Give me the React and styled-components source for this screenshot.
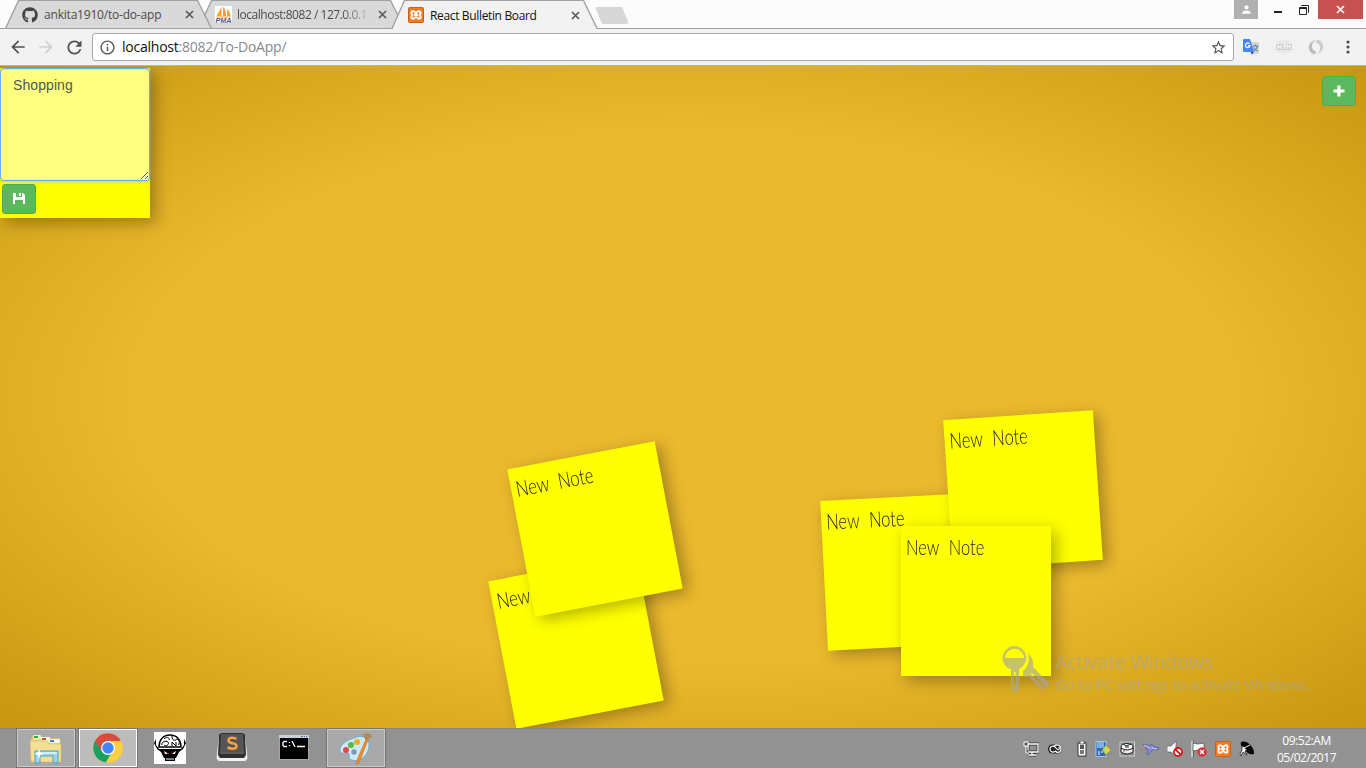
import React from "react";
import styled, { createGlobalStyle, css } from "styled-components";
import { MdArrowBack, MdArrowForward, MdRefresh, MdInfoOutline, MdStarBorder, MdPerson } from "react-icons/md";
import { FaGithub } from "react-icons/fa";

const Global = createGlobalStyle`
  * { box-sizing: border-box; }
  body { margin: 0; overflow: hidden; font-family: "Open Sans", "Noto Sans", sans-serif; }
  svg { display: block; flex: none; }
`;

const Screen = styled.div`
  display: flex;
  flex-direction: column;
  width: 1366px;
  height: 768px;
  overflow: hidden;
`;

/* Browser window */
const TitleBar = styled.header`
  display: flex;
  height: 28px;
  padding-left: 5px;
  background: #fcfcfc;
`;

const Tab = styled.div`
  position: relative;
  z-index: ${(p) => p.$z};
  display: flex;
  align-items: center;
  width: 207px;
  height: ${(p) => (p.$active ? 29 : 28)}px;
  margin-right: -14px;
  padding: 1px 16px 0 17px;
  flex: none;
  &::before, &::after {
    content: "";
    position: absolute;
    z-index: -1;
    inset: 0;
    background: #a0a0a0;
    clip-path: polygon(0 100%, 13px 0, 193px 0, 100% 100%);
  }
  &::after {
    background: ${(p) => (p.$active ? "#f2f2f2" : "#d9d9d9")};
    clip-path: polygon(1.5px 100%, 14px 1px, 192px 1px, calc(100% - 1.5px) 100%);
  }
`;

const TabTitle = styled.span`
  width: 134px;
  flex: none;
  margin-left: 6px;
  white-space: nowrap;
  font-size: 12px;
  letter-spacing: ${(p) => p.$spacing || 0}px;
  color: ${(p) => (p.$active ? "#111" : "#4c4c4c")};
  ${(p) => p.$fade && css`
    margin-left: 5px;
    mask-image: linear-gradient(90deg, #000 105px, transparent 136px);
  `}
`;

const TabClose = styled.div`
  margin-left: 7px;
`;

const NewTab = styled.div`
  width: 34px;
  height: 17px;
  margin: 7px 0 0 11px;
  background: #d7d7d7;
  border-radius: 3px;
  clip-path: polygon(0 0, 27px 0, 100% 100%, 7px 100%);
`;

const WindowControls = styled.div`
  display: flex;
  height: 19px;
  margin: 0 3px 0 auto;
`;

const Control = styled.div`
  display: flex;
  align-items: center;
  justify-content: center;
  width: ${(p) => p.$w}px;
  padding-right: ${(p) => p.$pad || 0}px;
  background: ${(p) => p.$bg || "transparent"};
  color: #fff;
`;

const Toolbar = styled.nav`
  display: flex;
  align-items: center;
  height: 38px;
  padding: 0 0 0 8px;
  background: #f2f2f2;
  border-top: 1px solid #a0a0a0;
  border-bottom: 1px solid #b5b5b5;
`;

const ToolButton = styled.div`
  display: flex;
  justify-content: center;
  width: ${(p) => p.$w || 28}px;
  padding-right: ${(p) => p.$pad ?? 8}px;
  flex: none;
  color: ${(p) => (p.$disabled ? "#d0d0d0" : "#505050")};
`;

const AddressBar = styled.div`
  display: flex;
  align-items: center;
  width: 1142px;
  height: 28px;
  padding: 0 6px;
  flex: none;
  background: #fff;
  border: 1px solid #a8a8a8;
  border-radius: 3px;
  color: #555;
`;

const Url = styled.span`
  flex: 1;
  margin: -1px 0 0 6px;
  font-size: 14px;
  letter-spacing: -0.23px;
  color: #888;
  b { font-weight: 400; color: #111; }
`;

/* Bulletin board */
const Board = styled.main`
  position: relative;
  height: 662px;
  overflow: hidden;
  background: radial-gradient(ellipse at center, #eab92d 57%, #c79810 99%);
`;

const Note = styled.article`
  position: absolute;
  left: ${(p) => p.$x}px;
  top: ${(p) => p.$y}px;
  width: 150px;
  height: 150px;
  background: #ff0;
  box-shadow: 5px 5px 15px 0 rgba(0, 0, 0, 0.3);
  transform: rotate(${(p) => p.$angle || 0}deg);
`;

const NoteText = styled.p`
  margin: 7px 0 0 5px;
  font: 300 22px/28px Lato, sans-serif;
  word-spacing: 7px;
  white-space: nowrap;
  color: #222;
  transform: scaleX(0.75);
  transform-origin: 0 0;
`;

const NoteEditor = styled.textarea`
  display: block;
  width: 150px;
  height: 113px;
  padding: 6px 12px;
  background: #ffff80;
  border: 1px solid #66afe9;
  border-radius: 4px;
  outline: none;
  box-shadow: inset 0 1px 1px rgba(0, 0, 0, 0.075), 0 0 4px rgba(102, 175, 233, 0.6);
  font: 14px/20px "Liberation Sans", Arial, sans-serif;
  letter-spacing: 0.08px;
  color: #555;
`;

const GreenButton = styled.button`
  display: flex;
  align-items: center;
  justify-content: center;
  width: 34px;
  height: 30px;
  padding: 0 1px 1px 0;
  background: #5cb85c;
  border: 1px solid #4cae4c;
  border-radius: 3px;
  color: #fff;
  ${(p) => p.$save && css`margin: 3px 0 0 2px;`}
  ${(p) => p.$floating && css`position: absolute; top: 10px; right: 10px;`}
`;

const Watermark = styled.aside`
  position: absolute;
  left: 1001px;
  top: 579px;
  display: flex;
  opacity: 0.68;
  color: #aaa69b;
`;

const WatermarkCopy = styled.div`
  margin: 3px 0 0 6px;
  white-space: nowrap;
`;

const WatermarkTitle = styled.div`
  font-size: 20px;
  line-height: 28px;
  letter-spacing: -0.4px;
`;

const WatermarkHint = styled.div`
  font-size: 15px;
  line-height: 16px;
  letter-spacing: -0.33px;
`;

/* Desktop taskbar */
const Taskbar = styled.footer`
  display: flex;
  height: 40px;
  padding-left: 17px;
  border-top: 1px solid #868686;
  background: #929292;
`;

const Apps = styled.div`
  display: flex;
  gap: 4px;
`;

const AppButton = styled.div`
  display: flex;
  align-items: center;
  justify-content: center;
  width: 58px;
  height: 38px;
  padding-bottom: ${(p) => p.$lift || 0}px;
  ${(p) => p.$open && css`
    background: #a9a9a9;
    border: 1px solid #c8c8c8;
    box-shadow: 0 0 0 1px #777;
  `}
  ${(p) => p.$focused && css`
    background: #bcbcbc;
    border-color: #fff;
  `}
`;

const Tray = styled.div`
  display: flex;
  align-items: center;
  margin-left: auto;
`;

const TrayItem = styled.div`
  display: flex;
  justify-content: center;
  width: 24px;
  padding: 0 ${(p) => (p.$shift ? 0 : 1)}px 0 ${(p) => p.$shift || 0}px;
`;

const Clock = styled.time`
  display: block;
  width: 95px;
  padding-top: 3px;
  margin-right: 12px;
  text-align: center;
  font-size: 12px;
  line-height: 17px;
  letter-spacing: -0.45px;
  color: #fff;
`;

const Cross = ({ size = 9, color = "#5a5a5a" }) => (
  <svg width={size} height={size} viewBox="0 0 9 9">
    <path d="M1 1l7 7M8 1l-7 7" stroke={color} strokeWidth="1.7" />
  </svg>
);

const XamppIcon = () => (
  <svg width="16" height="16" viewBox="0 0 16 16">
    <rect x=".5" y=".5" width="15" height="15" rx="1" fill="#f47b22" stroke="#c95e16" />
    <path d="M5 4.2c-2 0-2 2.6-.7 3.8-1.3 1.200-1.300 3.800.7 3.800S7 10 8 10s1 1.800 3 1.800 2-2.600.7-3.800C13 6.800 13 4.200 11 4.200S9 6 8 6 7 4.200 5 4.200zM6 8h4" fill="none" stroke="#fff" strokeWidth="1.900" />
  </svg>
);

const PmaIcon = () => (
  <svg width="17" height="17" viewBox="0 0 17 17">
    <rect width="17" height="17" fill="#fff" />
    <path d="M6.500 1v9H1.500zM8 .5c2.500 3 3.500 6 3 9.500H8zM12 3c2 2 3.500 4 3.500 7H12zM1 10.500h15l-1 1H2z" fill="#f7a12b" />
    <text x="0.500" y="16.500" fontFamily="Liberation Sans" fontSize="6.500" fontWeight="700" fontStyle="italic" textLength="16" lengthAdjust="spacingAndGlyphs" fill="#55558a">PMA</text>
  </svg>
);

const TranslateIcon = () => (
  <svg width="16" height="16" viewBox="0 0 16 16">
    <path d="M6 3h9a1 1 0 011 1v10a1 1 0 01-1 1H9z" fill="#d5d5d5" />
    <path d="M9.500 7h6M12.500 5.500V7M14.500 7c-.5 2.500-2 4-4 5M10.500 8.500c1 2 2.500 3 4.500 3.500" fill="none" stroke="#65859b" strokeWidth="1.200" />
    <path d="M1 0h6l4 13H1a1 1 0 01-1-1V1a1 1 0 011-1z" fill="#4285f4" />
    <path d="M7.500 13H11l-2 2.700z" fill="#3156b5" />
    <path d="M6.400 4.700A2.300 2.300 0 107 6.600H4.800" fill="none" stroke="#fff" strokeWidth="1.300" />
  </svg>
);

const HtmlBadge = () => (
  <svg width="16" height="16" viewBox="0 0 16 16">
    <path d="M2 2l9-1 3 1v11l-7 2-5-2z" fill="#e8e8e8" />
    <rect y="5" width="16" height="6" fill="#cfcfcf" />
    <path d="M2 6v4M5 6v4M2 8h3M7 6h3M8.500 6v4M11 10V6l1.500 2L14 6v4" fill="none" stroke="#fff" />
  </svg>
);

const SwirlIcon = () => (
  <svg width="16" height="16" viewBox="0 0 16 16">
    <path d="M9 .5a7 7 0 014.500 11.500c-1.300 1.700-3 2.500-5.500 3 3.500-2 5-5 3.500-8.500C10.800 4.700 9.500 4 8 4c.3-1.500.5-2.500 1-3.500z" fill="#cdcdcd" />
    <path d="M7 15.500A7 7 0 012.500 4C3.800 2.300 5.500 1.500 8 1 4.500 3 3 6 4.500 9.500 5.200 11.300 6.500 12 8 12c-.3 1.500-.5 2.500-1 3.500z" fill="#bababa" />
  </svg>
);

const PlusIcon = () => (
  <svg width="12" height="12" viewBox="0 0 12 12"><path d="M4.300.5h3.200v4h4v3h-4v4H4.300v-4H.5v-3h3.800z" fill="#fff" /></svg>
);

const SaveIcon = () => (
  <svg width="12" height="11" viewBox="0 0 12 11"><path d="M0 0h3v4h6V0h1l2 2v9h-2V6.500H2V11H0zM6 0h2v3H6z M2 4h8v3H2z" fill="#fff" /></svg>
);

const KeysIcon = () => (
  <svg width="48" height="49" viewBox="0 0 48 49" fill="currentColor">
    <path fillRule="evenodd" d="M13.500 1a12 12 0 014.500 23v20l-4 4-4-3V24.500A12 12 0 0113.500 1zm0 2.800A9.200 9.200 0 004 13h19a9.200 9.200 0 00-9.500-9.200zM13 27v17h1.500V27z" />
    <path fillRule="evenodd" d="M27 8c4 4 6 9 5 14l16 16-1 5-7 1-14-14-1 3-3-2v-5c5-4 7-10 5-18zM30 29l13 13 1-1-13-13z" />
  </svg>
);

const ExplorerIcon = () => (
  <svg width="34" height="32" viewBox="0 0 34 32">
    <path d="M3 4h9l1 2h18v23H2z" fill="#d8b962" />
    <rect x="4" y="3" width="8" height="4" rx="1" fill="#f5edc9" /><rect x="5" y="4" width="4" height="2" fill="#20b52e" />
    <path d="M2 7h28v8H2z" fill="#f2d98a" />
    <rect x="12" y="5" width="9" height="4" fill="#f9f4dd" /><rect x="13" y="6" width="4" height="2" fill="#d34a20" />
    <path d="M1 9h17l2 3h12v18H2z" fill="#f4df95" stroke="#d1b566" strokeWidth=".7" />
    <rect x="20" y="7" width="11" height="4" fill="#f9f4dd" /><rect x="21" y="8" width="4" height="2" fill="#2687d7" />
    <path d="M6 31V19h23v12h-5v-7H11v7z" fill="#9ed2ea" stroke="#4da0c4" />
    <path d="M7 20h21v2H7z" fill="#d3f0fa" /><path d="M10 16l1 5 4 1-4 1-1 5-1-5-4-1 4-1z" fill="#fff" />
  </svg>
);

const ChromeIcon = () => (
  <svg width="30" height="30" viewBox="0 0 30 30">
    <circle cx="15" cy="15" r="14.800" fill="#ffcd42" />
    <path d="M15 15L2.200 7.600a14.800 14.800 0 0010.600 22L19.500 18z" fill="#18a15f" />
    <path d="M2.200 7.600A14.800 14.800 0 0127.900 8H15l-6.300 11z" fill="#db4a3e" />
    <circle cx="15" cy="15" r="7" fill="#fff" /><circle cx="15" cy="15" r="5.700" fill="#4285f4" />
  </svg>
);

const BrainIcon = () => (
  <svg width="32" height="32" viewBox="0 0 32 32">
    <rect width="32" height="32" fill="#fff" />
    <path d="M2 7L0 11l3 6 4 3 3 6h1v3h10v-3h1l3-6 4-3 3-6-2-4v6l-3 4H5l-3-4z" fill="#000" />
    <path d="M5 15c0-7 4-12 11-12s11 5 11 12z" fill="#fff" stroke="#000" strokeWidth="1.500" />
    <path d="M8 13c-1-3 4-5 6-3s-2 5-4 3M10 7c3-3 6-1 5 1M18 4c0 3 1 5 4 4M18 14v-4l4 4v-4M22 7c4 1 4 4 2 6" fill="none" stroke="#000" />
    <path d="M10 19l5 3h-4zM22 19l-5 3h4z" fill="#fff" /><path d="M12 20l2 2M20 20l-2 2" stroke="#c22" />
    <path d="M12 27h8" stroke="#fff" />
  </svg>
);

const SublimeIcon = () => (
  <svg width="32" height="30" viewBox="0 0 32 30">
    <path d="M3 3h26l2.500 23-2 3h-27l-2-3z" fill="#f1f1f1" />
    <path d="M3 3Q4 1 6 1h20q2 0 3 2l1 20-2 3H4l-2-3z" fill="#303030" />
    <path d="M5 2h22l1 18H4z" fill="#555" /><path d="M4 21h24" stroke="#888" />
    <path d="M20.500 7c-3-2-8-2-8 1.500 0 4 8 1.500 8 5.300 0 3.700-5 3.500-9 1.700" fill="none" stroke="#f8a242" strokeWidth="2.500" />
  </svg>
);

const ConsoleIcon = () => (
  <svg width="30" height="25" viewBox="0 0 30 25">
    <rect width="30" height="25" fill="#a5a5a5" /><rect x="1" y="3" width="28" height="21" fill="#000" />
    <rect width="30" height="3" fill="#c9d0d6" /><path d="M22 1.500h2m1 0h1m1 0h1" stroke="#536d93" />
    <path d="M8 6.500H5l-1 1v3l1 1h3M10.500 7v1m0 2v1M13 6l3 6M18 11.500h8" fill="none" stroke="#fff" strokeWidth="1.300" />
  </svg>
);

const PaintIcon = () => (
  <svg width="34" height="32" viewBox="0 0 34 32">
    <path d="M15 6c9-4 16 0 15 8-1 11-12 18-19 13-2-2 1-5-2-6s-7 2-8-2C0 14 7 8 15 6z" fill="#cdeaf8" stroke="#6dafd3" />
    <circle cx="7" cy="18" r="3" fill="#e64b40" /><circle cx="12" cy="13" r="3" fill="#5bb947" /><circle cx="18" cy="10" r="3" fill="#f1ad27" /><circle cx="15" cy="20" r="2.700" fill="#789db5" />
    <path d="M27 7l2 1-9 23-3 1 1-4z" fill="#f28b2b" stroke="#bc6515" strokeWidth=".5" />
    <path d="M26.500 8L24 3l3-2 4 1 2 2-4 4z" fill="#b78658" />
  </svg>
);

const trayIcons = [
  <><path d="M5 3h10v8H5zM9 11v3M6 14h7" fill="none" stroke="#333" strokeWidth="3" /><path d="M5 3h10v8H5zM9 11v3M6 14h7" fill="none" stroke="#fff" strokeWidth="1.300" /><path d="M1 1h4v4H1zM3 5v7h3" fill="#555" stroke="#fff" /></>,
  <><rect x="1" y="3.500" width="14" height="9" rx="4.500" fill="#222" /><path d="M9 10c-3 2-6 1-6-2s4-4 6-1 4 2 3-1M7 5c3-2 7-1 7 3s-4 4-6 2" fill="none" stroke="#fff" strokeWidth="1.200" /></>,
  <><rect x="4" y="2" width="8" height="13" fill="#fff" stroke="#333" /><rect x="6" y="0" width="4" height="3" fill="#fff" stroke="#333" strokeWidth=".7" /><rect x="6" y="4" width="4" height="4" fill="#555" /><rect x="6" y="9" width="4" height="4" fill="#777" /></>,
  <><rect x="1" y=".5" width="10" height="15" fill="#3268b4" stroke="#c5def5" strokeWidth=".7" /><path d="M2 1h7v6H2z" fill="#78afe7" /><path d="M3 11h2m1 0h2M3 13h2" stroke="#fff" /><path d="M7 9l4-5 5 5-5 5z" fill="#f0cc44" stroke="#56844a" strokeWidth=".6" /><path d="M8 9l3-4v8z" fill="#a7de72" /></>,
  <><rect x="1" y="1" width="14.500" height="14" fill="#888" stroke="#ccc" /><ellipse cx="8" cy="6" rx="6" ry="3.500" fill="#fff" stroke="#222" /><path d="M2 7v4q6 4 12 0V7q-6 4-12 0" fill="#eee" stroke="#222" /><path d="M4 3l3 2 5-2M6 6h4" stroke="#222" fill="none" /><path d="M4 10h2" stroke="#d33" /></>,
  <><path d="M0 3l7 2 1-2 4 3 4 1-1 2-4-1-3 2-3 4-1-1 1-4-3-1 2-2z" fill="#8293dc" stroke="#424d8d" strokeWidth=".6" /><path d="M1 4l6 3M9 7l5 1" stroke="#c5d0ff" /><path d="M2 8h4" stroke="#bd5f67" /></>,
  <><path d="M0 5h4l5-5v15l-5-4H0z" fill="#fff" stroke="#555" strokeWidth=".7" /><circle cx="11" cy="11" r="4" fill="#fff" stroke="#d71920" strokeWidth="1.800" /><path d="M8 8l6 6" stroke="#d71920" strokeWidth="1.800" /></>,
  <><path d="M1 0v16" stroke="#333" strokeWidth="3" /><path d="M1 0v16" stroke="#fff" strokeWidth="1.500" /><path d="M2 2l5 1 6-1v8l-6-1-5 1z" fill="#fff" stroke="#444" strokeWidth=".7" /><circle cx="11" cy="11" r="4.700" fill="#dc3032" /><path d="M9 9l4 4m0-4l-4 4" stroke="#fff" strokeWidth="1.500" /></>,
  <XamppIcon />,
  <><path d="M2 1c6-3 14 6 13 12-4 1-7-1-9-4C3 7 1 4 2 1z" fill="#050505" /><path d="M3 5c2 0 3 3 5 4l-2 1 2 4-4-3-2 4-1-2 2-4z" fill="#fff" stroke="#222" strokeWidth=".8" /><path d="M5 7l6-3" stroke="#eee" /></>,
];

const notes = [
  { x: 501, y: 499.5, angle: -10.8 },
  { x: 520, y: 387.5, angle: -10.8 },
  { x: 824, y: 431, angle: -3 },
  { x: 948, y: 344 + 5, angle: -3.8 },
  { x: 901, y: 460, angle: 0 },
];

export default function App() {
  return (
    <Screen>
      <Global />
      <TitleBar>
        <Tab $z={2}>
          <FaGithub size={16} color="#444" />
          <TabTitle $spacing={-0.2}>ankita1910/to-do-app</TabTitle>
          <TabClose><Cross /></TabClose>
        </Tab>
        <Tab $z={1}>
          <PmaIcon />
          <TabTitle $fade $spacing={-0.47}>localhost:8082 / 127.0.0.1</TabTitle>
          <TabClose><Cross /></TabClose>
        </Tab>
        <Tab $z={3} $active>
          <XamppIcon />
          <TabTitle $active $spacing={-0.35}>React Bulletin Board</TabTitle>
          <TabClose><Cross /></TabClose>
        </Tab>
        <NewTab />
        <WindowControls>
          <Control $w={24} $bg="#b0b0b0"><MdPerson size={13} /></Control>
          <Control $w={40}><svg width="8" height="8" viewBox="0 0 8 8"><path d="M0 6h8" stroke="#222" strokeWidth="2" /></svg></Control>
          <Control $w={20} $pad={8}><svg width="10" height="10" viewBox="0 0 10 10" fill="none" stroke="#222"><path d="M2.500 1V.5h7v7H9" /><path d="M.5 2.500h7v7h-7zM1 3.500h6" /></svg></Control>
          <Control $w={45} $bg="#c75050"><Cross size={9} color="#fff" /></Control>
        </WindowControls>
      </TitleBar>
      <Toolbar>
        <ToolButton><MdArrowBack size={20} /></ToolButton>
        <ToolButton $disabled><MdArrowForward size={20} /></ToolButton>
        <ToolButton><MdRefresh size={21} /></ToolButton>
        <AddressBar>
          <MdInfoOutline size={17} />
          <Url><b>localhost</b>:8082/To-DoApp/</Url>
          <MdStarBorder size={17} />
        </AddressBar>
        <ToolButton $w={34} $pad={0}><TranslateIcon /></ToolButton>
        <ToolButton $w={32} $pad={0}><HtmlBadge /></ToolButton>
        <ToolButton $w={32} $pad={0}><SwirlIcon /></ToolButton>
        <ToolButton $w={32} $pad={0}>
          <svg width="4" height="14" viewBox="0 0 4 14" fill="#505050"><circle cx="2" cy="2" r="1.600" /><circle cx="2" cy="7" r="1.600" /><circle cx="2" cy="12" r="1.600" /></svg>
        </ToolButton>
      </Toolbar>
      <Board>
        <Note $x={0} $y={2}>
          <NoteEditor defaultValue="Shopping" />
          <GreenButton $save aria-label="Save"><SaveIcon /></GreenButton>
        </Note>
        {notes.map((n) => (
          <Note key={`${n.x}-${n.y}`} $x={n.x} $y={n.y} $angle={n.angle}>
            <NoteText>New Note</NoteText>
          </Note>
        ))}
        <GreenButton $floating aria-label="Add note"><PlusIcon /></GreenButton>
        <Watermark>
          <KeysIcon />
          <WatermarkCopy>
            <WatermarkTitle>Activate Windows</WatermarkTitle>
            <WatermarkHint>Go to PC settings to activate Windows.</WatermarkHint>
          </WatermarkCopy>
        </Watermark>
      </Board>
      <Taskbar>
        <Apps>
          <AppButton $open><ExplorerIcon /></AppButton>
          <AppButton $open $focused><ChromeIcon /></AppButton>
          <AppButton><BrainIcon /></AppButton>
          <AppButton $lift={2}><SublimeIcon /></AppButton>
          <AppButton $lift={1}><ConsoleIcon /></AppButton>
          <AppButton $open><PaintIcon /></AppButton>
        </Apps>
        <Tray>
          {trayIcons.map((icon, i) => (
            <TrayItem key={i} $shift={i === 2 ? 5 : 0}>
              <svg width="16" height="16" viewBox="0 0 16 16">{icon}</svg>
            </TrayItem>
          ))}
        </Tray>
        <Clock>09:52:AM<br />05/02/2017</Clock>
      </Taskbar>
    </Screen>
  );
}
